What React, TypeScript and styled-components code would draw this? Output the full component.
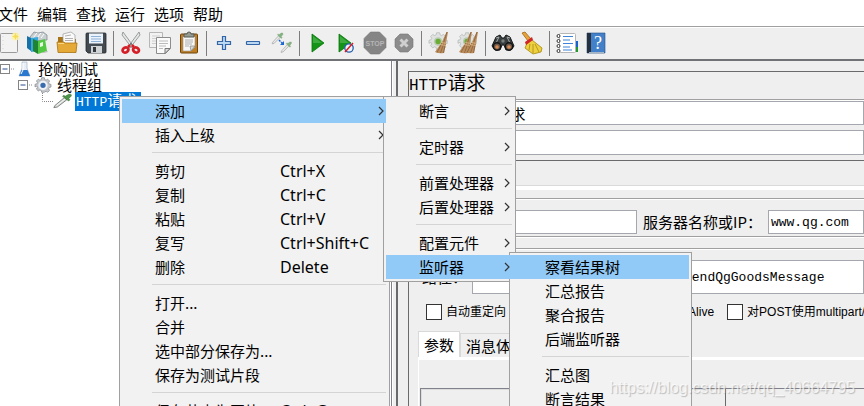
import React from "react";
import styled, { createGlobalStyle, css } from "styled-components";

const sans = `"Noto Sans CJK SC", "Noto Sans", sans-serif`;
const mono = `"Liberation Mono", "Noto Sans CJK SC", monospace`;
const face = "#efefef";
const line = "#a0a0a0";
const dark = "#6a6a6c";

const Global = createGlobalStyle`
  * { box-sizing: border-box; }
  html, body, #root { height: 100%; }
  body { margin: 0; overflow: hidden; background: #fff; color: #000; font: 15px/24px ${sans}; }
  button { font: inherit; color: inherit; border: 0; background: none; padding: 0; white-space: nowrap; }
  ul { list-style: none; margin: 0; padding: 0; }
  svg { display: block; }
`;

const Window = styled.div`
  height: 100vh;
  display: flex;
  flex-direction: column;
  overflow: hidden;
`;

const MenuBar = styled.nav`
  display: flex;
  gap: 9px;
  height: 26px;
  padding-top: 2px;
  margin-left: -2px;
`;

const Toolbar = styled.div`
  display: flex;
  align-items: center;
  gap: 5px;
  flex: none;
  height: 35px;
  background: ${face};
  border-top: 1px solid ${line};
  border-bottom: 2px solid #707276;
  box-shadow: inset 0 1px #fff;
`;

const Tool = styled.button`
  flex: none;
  width: 24px;
  height: 24px;
  &:first-child { margin-left: -3px; }
`;

const ToolSeparator = styled.span`
  flex: none;
  width: 1px;
  height: 25px;
  background: #7d7d7d;
`;

const Body = styled.div`
  flex: 1;
  min-height: 0;
  display: grid;
  grid-template-columns: minmax(0, 392px) 4px minmax(0, 1fr);
`;

const TreePane = styled.div`
  background: #fff;
  border-right: 1px solid #7f828a;
`;

const Splitter = styled.div`
  background: ${face};
  border-left: 1px solid #fff;
`;

const TreeRow = styled.li<{ $indent: number }>`
  display: flex;
  align-items: center;
  height: 16px;
  line-height: 16px;
  padding-left: ${(p) => p.$indent}px;
`;

const Expander = styled.button`
  width: 15px;
  height: 16px;
  flex: none;
`;

const TreeIcon = styled.span<{ $gap: number }>`
  flex: none;
  width: 20px;
  margin-right: ${(p) => p.$gap}px;
`;

const TreeLabel = styled.span<{ $selected?: boolean }>`
  white-space: nowrap;
  ${(p) => p.$selected && css`
    background: #0078d7;
    color: #fff;
    font: 13px/16px ${mono};
    padding: 0 4px 0 1px;
  `}
`;

const CjkText = styled.span`
  font: 15px/16px ${sans};
`;

const Details = styled.main`
  background: ${face};
  border-left: 2px solid ${dark};
  padding: 10px 0 0 10px;
  overflow: hidden;
`;

const Form = styled.form`
  height: 100%;
  border-top: 1px solid ${dark};
  border-left: 1px solid ${dark};
  display: flex;
  flex-direction: column;
  > * { flex: none; }
`;

const Title = styled.h1`
  margin: 0;
  height: 27px;
  font: 16px/20px ${mono};
  span { font: 19px/20px ${sans}; }
`;

const NameGroup = styled.div`
  border-top: 1px solid ${line};
  box-shadow: inset 0 1px #fff;
  padding-top: 1px;
  height: 58px;
  display: grid;
  grid-template-rows: 24px 25px;
  gap: 5px;
`;

const Field = styled.label<{ $indent: number; $gap: number; $grow?: boolean }>`
  display: flex;
  align-items: center;
  gap: ${(p) => p.$gap}px;
  padding-left: ${(p) => p.$indent}px;
  white-space: nowrap;
  flex: ${(p) => (p.$grow ? "1" : "none")};
  min-width: 0;
`;

const TextBox = styled.input<{ $mono?: boolean; $inset?: number }>`
  flex: 1;
  min-width: 0;
  height: 100%;
  border: 1px solid #a4a7ad;
  background: #fff;
  outline: 0;
  padding: 0 0 0 ${(p) => p.$inset ?? 2}px;
  font: ${(p) => (p.$mono ? `13px ${mono}` : `15px ${sans}`)};
`;

const TabStrip = styled.div`
  height: 30px;
  margin-top: 3px;
  border-top: 1px solid ${dark};
  border-bottom: 4px solid #fff;
  box-shadow: inset 0 -1px #dadada;
`;

const ServerRow = styled.div`
  display: flex;
  height: 39px;
  margin-top: 8px;
  padding: 11px 0 2px;
  border-top: 1px solid ${line};
  border-bottom: 1px solid ${line};
  box-shadow: inset 0 1px #fff, 0 1px #fff;
`;

const ProtocolField = styled(Field)`
  width: 228px;
`;

const PathRow = styled.div`
  display: flex;
  height: 46px;
  margin-top: 11px;
  padding-top: 11px;
  border-top: 1px solid ${line};
  box-shadow: inset 0 1px #fff;
`;

const Options = styled.div`
  display: flex;
  justify-content: flex-start;
  height: 37px;
  padding: 9px 0 0 17px;
  gap: 13px;
`;

const CheckLabel = styled.label<{ $width?: number }>`
  display: flex;
  gap: 4px;
  height: 18px;
  align-items: center;
  flex: none;
  width: ${(p) => (p.$width ? `${p.$width}px` : "auto")};
  font: 12px/18px "Liberation Sans", "Noto Sans CJK SC", sans-serif;
  white-space: nowrap;
`;

const Check = styled.input`
  appearance: none;
  width: 16px;
  height: 16px;
  margin: 0;
  border: 1px solid #333;
  background: #fff;
`;

const Tabs = styled.div`
  display: flex;
  align-items: flex-end;
  padding-left: 9px;
  height: 26px;
`;

const Tab = styled.button<{ $active?: boolean }>`
  height: ${(p) => (p.$active ? 26 : 24)}px;
  padding: 0 5px;
  background: ${(p) => (p.$active ? "#fff" : face)};
  border: 1px solid #d9d9d9;
  border-bottom: 0;
  line-height: 22px;
`;

const Parameters = styled.div`
  flex: 1;
  margin-left: 9px;
  border-top: 3px solid #fff;
  border-left: 1px solid #fff;
  padding: 28px 0 0 1px;
`;

const ParameterTable = styled.div`
  height: 100%;
  display: grid;
  grid-template-columns: 305px 1fr;
  border-top: 1px solid #7f828a;
  border-left: 1px solid #7f828a;
`;

const ColumnHead = styled.div`
  border-right: 1px solid ${dark};
  box-shadow: inset 1px 1px #dcdcdc;
`;

const MenuPanel = styled.ul<{ $width: number; $end: number }>`
  position: absolute;
  width: ${(p) => p.$width}px;
  padding: 2px ${(p) => p.$end}px 2px 2px;
  background: #f2f2f2;
  border: 1px solid ${line};
`;

const ContextMenu = styled(MenuPanel)`
  left: 119px;
  top: 96px;
`;

const SubMenu = styled(MenuPanel)`
  left: calc(100% - 3px);
  top: -3px;
  z-index: 1;
`;

const MenuItem = styled.li`
  position: relative;
`;

const MenuButton = styled.button<{ $active?: boolean }>`
  display: flex;
  align-items: center;
  width: 100%;
  height: 24px;
  padding: 0 2px 0 33px;
  line-height: 24px;
  ${(p) => p.$active && css`
    position: relative;
    z-index: 2;
    background: #91c9f7;
  `}
`;

const ItemName = styled.span`
  flex: 1;
  text-align: left;
`;

const Shortcut = styled.kbd`
  width: 104px;
  text-align: left;
  font: 16px/24px "Noto Sans", sans-serif;
`;

const Divider = styled.li`
  height: 12px;
  padding: 5px 0 0 30px;
  &::before { content: ""; display: block; height: 1px; background: #d4d4d4; }
`;

const Watermark = styled.span`
  position: absolute;
  right: 9px;
  bottom: 7px;
  z-index: 3;
  font: 16px/22px "Liberation Sans", sans-serif;
  color: rgba(255, 255, 255, 0.7);
  text-shadow: 1px 1px 1px rgba(120, 120, 120, 0.45);
`;

const Chevron = () => (
  <svg width="6" height="10" viewBox="0 0 6 10" fill="none" stroke="#333" strokeWidth="1.2"><path d="M1 1l4 4-4 4" /></svg>
);

const Svg = ({ children }: { children: React.ReactNode }) => (
  <svg width="24" height="24" viewBox="0 0 24 24">{children}</svg>
);

const gearPath = "M10 1h4l.6 2.8 2 .9 2.5-1.5 2.8 2.8-1.5 2.5.9 2 2.7.6v4l-2.7.6-.9 2 1.5 2.5-2.8 2.8-2.5-1.5-2 .9L14 23h-4l-.6-2.7-2-.9-2.5 1.5-2.8-2.8 1.5-2.5-.9-2L0 14.900v-4l2.700-.6.9-2L2.100 6l2.800-2.800 2.500 1.500 2-.9z";

const Straw = ({ x }: { x: number }) => (
  <g transform={`translate(${x} 0)`}>
    <path d="M19.500 1L15 11l-7 10q4 2 9 1l2-10L21 1z" fill="#b98d5e" />
    <path d="M20 1l-3.500 11M15 12l-5 9.500M17 12l-3.500 10M18.500 12l-2 10" stroke="#85592f" strokeWidth=".7" fill="none" />
    <path d="M14.500 11.500l5 1M13 13.500l6 1" stroke="#e2bf91" strokeWidth=".8" />
  </g>
);

const SmallGear = () => (
  <g transform="translate(2 1) scale(.76)">
    <path d={gearPath} fill="#dfe2e0" stroke="#b3b8b5" />
    <circle cx="12" cy="12.500" r="4.500" fill="#69ad35" stroke="#b9c9ae" strokeWidth="2" />
  </g>
);

const Pipette = () => (
  <>
    <path d="M2 22l1-3L14 7l3 3L6 21z" fill="#d5d8d5" stroke="#707571" strokeWidth="1.100" />
    <path d="M5 19L15 9" stroke="#fff" />
    <path d="M12 5l7 7 1.500-2-1.500-1.500 3-4Q23 1 19 2l-4 3-1.500-1.500z" fill="#4d9548" stroke="#2b6c2b" strokeWidth=".7" />
  </>
);

const glyphs: Record<string, React.ReactNode> = {
  "新建": (
    <>
      <rect x="3.500" y="2.500" width="17" height="19" rx="1" fill="#f2f2f3" stroke="#9a9a9a" />
      <path d="M6 5v14" stroke="#d5d5d8" strokeDasharray="1 3" />
      <circle cx="18.500" cy="5.500" r="4" fill="#fff3a2" opacity=".85" />
      <path d="M18.500 2l1 2.500 2.500 1-2.500 1-1 2.500-1-2.500-2.500-1 2.500-1z" fill="#f4dc58" />
    </>
  ),
  "模板": (
    <>
      <path d="M4 6l4-5 4 1 5-1 4 3v5L5 10z" fill="#c9ced1" stroke="#788288" strokeWidth=".7" />
      <path d="M7 7l4-5M11 7l4-5M15 7l3-4" stroke="#fff" />
      <path d="M1 5l4 2v13l-4-3z" fill="#1570a5" />
      <path d="M5 7l7-1v14l-7 1z" fill="#38a9df" />
      <path d="M7 10l3-1v3l-3 1z" fill="#fff" />
      <path d="M7 8l5 2v13l-5-3z" fill="#208331" />
      <path d="M12 10l7-2 2 12-9 3z" fill="#53c943" />
      <path d="M14 12l3-1v4l-3 1z" fill="#e7ffe3" />
      <path d="M15 22l6-2 1 1-5 1z" fill="#b4b4b4" />
    </>
  ),
  "打开": (
    <>
      <path d="M3 6h5l1 2h12v12H3z" fill="#a87415" />
      <path d="M8 12V3l8-2 4 3v10H8z" fill="#fafafa" stroke="#999" strokeWidth=".7" />
      <path d="M10 5l6-1M10 7.500h8M10 9.500h8" stroke="#b1b1b1" />
      <path d="M2 11h7l1 1h12l-1 9.500H3z" fill="#e4a936" stroke="#a97412" strokeWidth=".8" />
      <path d="M3 12.500h6" stroke="#f7d486" />
    </>
  ),
  "保存": (
    <>
      <path d="M2 3q0-1 1-1h18q1 0 1 1v18q0 1-1 1H4l-2-2z" fill="#444a52" stroke="#25292e" strokeWidth=".8" />
      <rect x="5" y="2.500" width="14" height="10" fill="#eaf2fb" />
      <path d="M7 5.500h10M7 8h10M7 10.500h10" stroke="#8fb0d7" />
      <rect x="7" y="15" width="11" height="7" fill="#d0d3d5" />
      <rect x="9" y="16" width="3" height="5" fill="#343940" />
    </>
  ),
  "剪切": (
    <>
      <path d="M4 1l11 15-2 1L3 4zM20 1L9 16l2 1L21 4z" fill="#e5e7e7" stroke="#858989" strokeWidth=".8" />
      <circle cx="12" cy="13" r="1" fill="#666" />
      <g fill="none" stroke="#d51f28" strokeWidth="2.800">
        <ellipse cx="6.500" cy="19" rx="3" ry="2.400" transform="rotate(-25 6.500 19)" />
        <ellipse cx="17" cy="19" rx="3" ry="2.400" transform="rotate(25 17 19)" />
      </g>
      <path d="M9 16l2-2M15 16l-2-2" stroke="#d51f28" strokeWidth="2.500" />
    </>
  ),
  "复制": (
    <>
      <path d="M1.500 1.500h13v15h-13z" fill="#f2f2f2" stroke="#b6b6b6" />
      <path d="M4 5h8M4 7.500h8M4 10h5M4 12.500h4" stroke="#cfcfcf" />
      <path d="M8.500 6.500h14v11l-5 5h-9z" fill="#fafafa" stroke="#8d8d8d" />
      <path d="M11 10h9M11 12.500h9M11 15h7M11 17.500h4" stroke="#bababa" />
      <path d="M22 17.500h-5v5z" fill="#ddd" stroke="#777" />
    </>
  ),
  "粘贴": (
    <>
      <rect x="3.500" y="3" width="17" height="19" rx="1" fill="#bd7e24" stroke="#71440d" />
      <path d="M6 5.500h12V16l-4 4H6z" fill="#f7f7f7" stroke="#999" strokeWidth=".6" />
      <path d="M8 9h8M8 11h8M8 13h7M8 15h4" stroke="#a6a6a6" strokeWidth=".9" />
      <path d="M18 15h-5l1 5z" fill="#d9d9d9" stroke="#777" strokeWidth=".6" />
      <path d="M7 6V3h3q0-2 2-2t2 2h3v3z" fill="#969b92" stroke="#555b53" />
    </>
  ),
  "展开": <path d="M10.500 5.500h3v5h5v3h-5v5h-3v-5h-5v-3h5z" fill="#bcd7f2" stroke="#3465a4" strokeWidth="1.200" />,
  "收起": <rect x="5.500" y="10.500" width="13" height="3" rx=".5" fill="#bcd7f2" stroke="#3465a4" strokeWidth="1.200" />,
  "切换": (
    <>
      <g transform="translate(1 1) scale(.54)" opacity=".65"><Pipette /></g>
      <g transform="translate(10 10) scale(.52)" opacity=".65"><Pipette /></g>
      <path d="M9 9l4 4" stroke="#1b67d2" strokeWidth="1.500" strokeDasharray="2 1" />
      <path d="M14 10v4h-4z" fill="#1b67d2" />
    </>
  ),
  "启动": (
    <>
      <path d="M7 3v18l12-9z" fill="#149417" stroke="#087309" strokeWidth=".8" />
      <path d="M8 5v7l9 0z" fill="#55b756" opacity=".65" />
    </>
  ),
  "不停顿启动": (
    <>
      <path d="M5 3v18l12-9z" fill="#149417" stroke="#087309" strokeWidth=".8" />
      <path d="M6 5v7h9z" fill="#55b756" opacity=".65" />
      <circle cx="15" cy="17" r="4.200" fill="#eef4ff" stroke="#245fa9" strokeWidth="1.300" />
      <path d="M11 21l8-9" stroke="#d61f28" strokeWidth="1.500" />
    </>
  ),
  "停止": (
    <>
      <path d="M7.500 1h9L23 7.500v9L16.500 23h-9L1 16.500v-9z" fill="#858585" stroke="#777" strokeWidth=".6" />
      <text x="12" y="15" textAnchor="middle" fontFamily="Liberation Sans, sans-serif" fontWeight="700" fontSize="7" fill="#b6b6b6">STOP</text>
    </>
  ),
  "关闭": (
    <>
      <path d="M8 3h8l5 5v8l-5 5H8l-5-5V8z" fill="#8c8c8c" stroke="#777" strokeWidth=".6" />
      <path d="M8.500 8.500l7 7M15.500 8.500l-7 7" stroke="#cfcfcf" strokeWidth="3" />
    </>
  ),
  "清除": <><SmallGear /><Straw x={0} /></>,
  "清除全部": <><SmallGear /><Straw x={-5} /><Straw x={1} /></>,
  "查找": (
    <>
      <path d="M5 6l4-2 2 3h2l2-3 4 2 4 9-3 4h-5l-2-5h-2l-2 5H4l-3-4z" fill="#393d3d" stroke="#171a1a" />
      <path d="M5 7l3-1-3 6M19 7l-3-1 3 6" stroke="#a2a8a7" fill="none" />
      <circle cx="6" cy="15.500" r="3.700" fill="#69584a" stroke="#101313" strokeWidth="1.400" />
      <circle cx="18" cy="15.500" r="3.700" fill="#69584a" stroke="#101313" strokeWidth="1.400" />
      <circle cx="6" cy="16" r="1.800" fill="#d98a53" /><circle cx="18" cy="16" r="1.800" fill="#d98a53" />
      <circle cx="12" cy="10" r="1.700" fill="#788080" />
    </>
  ),
  "重置查找": (
    <>
      <path d="M2 2l3-1 6 7-3 2z" fill="#e9a33b" stroke="#9d681c" strokeWidth=".8" />
      <path d="M12 9l10 8-1 4-8 2-8-6 3-7z" fill="#edd13e" stroke="#a4850e" strokeWidth=".8" />
      <path d="M10 13l-1 6M13 13v9M15 13l4 8" stroke="#b8971b" fill="none" />
      <path d="M5 11l7-5 1 3-7 5z" fill="#cf2727" />
    </>
  ),
  "函数助手": (
    <>
      <path d="M17 10h6v6h-6z" fill="#1664cf" /><path d="M17 16h6v5h-6z" fill="#229a2c" />
      <rect x="4.500" y="2.500" width="16" height="19" rx="1" fill="#fff" stroke="#b6b6b6" />
      <path d="M8 5.500h10M8 9h7M8 12.500h10M8 16h7M8 19h9" stroke="#3f83d7" strokeWidth="1.200" />
      <g fill="#fff" stroke="#333" strokeWidth="1"><circle cx="3.500" cy="5" r="1.500" /><circle cx="3.500" cy="10" r="1.500" /><circle cx="3.500" cy="15" r="1.500" /><circle cx="3.500" cy="20" r="1.500" /></g>
    </>
  ),
  "帮助": (
    <>
      <path d="M3 2h18v20H3z" fill="#4281ca" stroke="#244e83" strokeWidth=".6" />
      <path d="M3 2h4v20H3z" fill="#26313d" />
      <path d="M5 21h15v2H5z" fill="#a7b6c7" />
      <text x="14" y="18" textAnchor="middle" fontFamily="Liberation Serif, serif" fontSize="18" fill="#fff">?</text>
    </>
  ),
};

const toolGroups = [
  ["新建", "模板", "打开", "保存"],
  ["剪切", "复制", "粘贴"],
  ["展开", "收起", "切换"],
  ["启动", "不停顿启动", "停止", "关闭"],
  ["清除", "清除全部"],
  ["查找", "重置查找"],
  ["函数助手", "帮助"],
];

type Entry = { name: string; keys?: string; sub?: boolean; children?: React.ReactNode } | null;

const contextEntries = (sub: React.ReactNode): Entry[] => [
  { name: "添加", sub: true, children: sub },
  { name: "插入上级", sub: true },
  null,
  { name: "剪切", keys: "Ctrl+X" },
  { name: "复制", keys: "Ctrl+C" },
  { name: "粘贴", keys: "Ctrl+V" },
  { name: "复写", keys: "Ctrl+Shift+C" },
  { name: "删除", keys: "Delete" },
  null,
  { name: "打开..." },
  { name: "合并" },
  { name: "选中部分保存为..." },
  { name: "保存为测试片段" },
  null,
  { name: "保存节点为图片", keys: "Ctrl+G" },
];

const addEntries = (sub: React.ReactNode): Entry[] => [
  { name: "断言", sub: true },
  null,
  { name: "定时器", sub: true },
  null,
  { name: "前置处理器", sub: true },
  { name: "后置处理器", sub: true },
  null,
  { name: "配置元件", sub: true },
  { name: "监听器", sub: true, children: sub },
];

const listenerEntries: Entry[] = [
  { name: "察看结果树" },
  { name: "汇总报告" },
  { name: "聚合报告" },
  { name: "后端监听器" },
  null,
  { name: "汇总图" },
  { name: "断言结果" },
];

const Entries = ({ items, active }: { items: Entry[]; active: string }) => (
  <>
    {items.map((e, i) =>
      e ? (
        <MenuItem key={i}>
          <MenuButton type="button" $active={e.name === active}>
            <ItemName>{e.name}</ItemName>
            {e.keys && <Shortcut>{e.keys}</Shortcut>}
            {e.sub && <Chevron />}
          </MenuButton>
          {e.children}
        </MenuItem>
      ) : (
        <Divider key={i} />
      )
    )}
  </>
);

const Minus = () => (
  <svg width="15" height="16" viewBox="0 0 15 16">
    <rect x=".5" y="3.500" width="9" height="9" fill="#fff" stroke="#848484" />
    <path d="M2.500 8h5" stroke="#2b4a8b" />
    <path d="M11 8h4" stroke="#888" strokeDasharray="1 1" />
  </svg>
);

export default function App() {
  return (
    <Window>
      <Global />
      <MenuBar>
        {["文件", "编辑", "查找", "运行", "选项", "帮助"].map((m) => <button key={m}>{m}</button>)}
      </MenuBar>
      <Toolbar>
        {toolGroups.map((group, i) => (
          <React.Fragment key={i}>
            {i > 0 && <ToolSeparator />}
            {group.map((name) => <Tool key={name} aria-label={name}><Svg>{glyphs[name]}</Svg></Tool>)}
          </React.Fragment>
        ))}
      </Toolbar>
      <Body>
        <TreePane>
          <ul>
            <TreeRow $indent={0}>
              <Expander aria-label="折叠"><Minus /></Expander>
              <TreeIcon $gap={3}>
                <svg width="20" height="16" viewBox="0 0 20 16">
                  <path d="M7 1h5v6l3 8H4l3-8z" fill="#e6eff7" stroke="#a6b5c3" strokeWidth=".7" />
                  <path d="M6.500 9h6l2.500 6H4z" fill="#2b78cf" />
                  <path d="M8 2v7l-2 4" stroke="#fff" fill="none" />
                </svg>
              </TreeIcon>
              <TreeLabel>抢购测试</TreeLabel>
            </TreeRow>
            <TreeRow $indent={18}>
              <Expander aria-label="折叠"><Minus /></Expander>
              <TreeIcon $gap={4}>
                <svg width="20" height="16" viewBox="-3 0 30 24">
                  <path d={gearPath} fill="#c4c7cb" stroke="#82878d" />
                  <circle cx="12" cy="12.500" r="5.500" fill="#3a6cad" stroke="#eef1f5" strokeWidth="3" />
                </svg>
              </TreeIcon>
              <TreeLabel>线程组</TreeLabel>
            </TreeRow>
            <TreeRow $indent={42}>
              <svg width="11" height="16" viewBox="0 0 11 16" fill="none" stroke="#888" strokeDasharray="1 1"><path d="M.5 0v8.500H11" /></svg>
              <TreeIcon $gap={2}>
                <svg width="20" height="16" viewBox="1 0 23 24" preserveAspectRatio="none"><Pipette /></svg>
              </TreeIcon>
              <TreeLabel $selected>HTTP<CjkText>请求</CjkText></TreeLabel>
            </TreeRow>
          </ul>
        </TreePane>
        <Splitter />
        <Details>
          <Form>
            <Title>HTTP<span>请求</span></Title>
            <NameGroup>
              <Field $indent={2} $gap={0}>名称：<TextBox defaultValue="HTTP请求" $inset={0} /></Field>
              <Field $indent={2} $gap={0}>注释：<TextBox /></Field>
            </NameGroup>
            <TabStrip />
            <ServerRow>
              <ProtocolField $indent={13} $gap={6}>协议：<TextBox /></ProtocolField>
              <Field $indent={6} $gap={6} $grow>服务器名称或IP：<TextBox $mono defaultValue="www.qg.com" /></Field>
            </ServerRow>
            <PathRow>
              <Field $indent={13} $gap={5} $grow>路径：<TextBox $mono $inset={211} defaultValue="sendQgGoodsMessage" /></Field>
            </PathRow>
            <Options>
              <CheckLabel><Check type="checkbox" />自动重定向</CheckLabel>
              <CheckLabel $width={108}><Check type="checkbox" />跟随重定向</CheckLabel>
              <CheckLabel><Check type="checkbox" />KeepAlive</CheckLabel>
              <CheckLabel><Check type="checkbox" />对POST使用multipart/form-data</CheckLabel>
            </Options>
            <Tabs>
              <Tab type="button" $active>参数</Tab>
              <Tab type="button">消息体数据</Tab>
            </Tabs>
            <Parameters>
              <ParameterTable><ColumnHead /></ParameterTable>
            </Parameters>
          </Form>
        </Details>
      </Body>
      <ContextMenu $width={271} $end={3}>
        <Entries
          active="添加"
          items={contextEntries(
            <SubMenu $width={133} $end={3}>
              <Entries
                active="监听器"
                items={addEntries(
                  <SubMenu $width={183} $end={2}>
                    <Entries active="察看结果树" items={listenerEntries} />
                  </SubMenu>
                )}
              />
            </SubMenu>
          )}
        />
      </ContextMenu>
      <Watermark>https://blog.csdn.net/qq_40664795</Watermark>
    </Window>
  );
}
